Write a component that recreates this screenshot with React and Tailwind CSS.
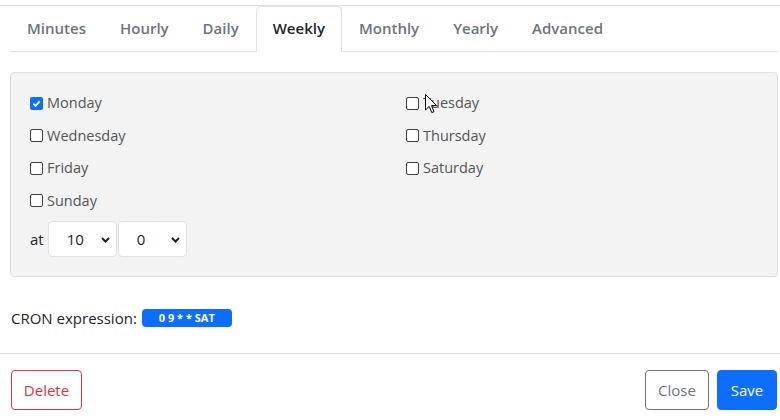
import React from "react";

const tabs = ["Minutes", "Hourly", "Daily", "Weekly", "Monthly", "Yearly", "Advanced"];

const days = [
  ["Monday", true],
  ["Tuesday", false],
  ["Wednesday", false],
  ["Thursday", false],
  ["Friday", false],
  ["Saturday", false],
  ["Sunday", false],
];

function Check({ checked }) {
  if (checked) {
    return (
      <span className="w-[13px] h-[13px] rounded-[2px] bg-[#0d6efd] flex items-center justify-center">
        <svg width="9" height="9" viewBox="0 0 10 10">
          <path d="M1.5 5.2 L4 7.6 L8.6 2.4" fill="none" stroke="white" strokeWidth="2" />
        </svg>
      </span>
    );
  }
  return <span className="w-[13px] h-[13px] rounded-[2px] border border-[#3f3f3f] bg-white" />;
}

function Select({ value }) {
  return (
    <div className="relative w-[69px] h-[36px] bg-white border border-[#dee2e6] rounded-[4px] flex items-center pl-[18px] text-[15px] text-[#212529]">
      {value}
      <svg className="absolute right-[6px] top-[15px]" width="9" height="6" viewBox="0 0 9 6">
        <path d="M1 1 L4.5 4.5 L8 1" fill="none" stroke="#222" strokeWidth="2" />
      </svg>
    </div>
  );
}

export default function App() {
  return (
    <div
      className="relative w-[780px] h-[420px] bg-white overflow-hidden text-[#212529]"
      style={{ fontFamily: '"Open Sans", "Noto Sans", sans-serif' }}
    >
      {/* header line */}
      <div className="h-[6px] border-b border-[#dee2e6]" />

      <div className="pl-[10px] pr-[2px]">
        {/* Tabs */}
        <div className="flex h-[46px] border-b border-[#dee2e6]">
          {tabs.map((t) => (
            <div
              key={t}
              className={
                t === "Weekly"
                  ? "h-[46px] px-[16px] pb-[2px] flex items-center border border-[#dee2e6] border-b-white rounded-t-[5px] bg-white text-[15px] font-semibold text-[#212529]"
                  : "h-[46px] px-[16px] pb-[2px] flex items-center border border-transparent text-[15px] font-semibold text-[#6c757d]"
              }
            >
              {t}
            </div>
          ))}
        </div>

        {/* Weekly panel */}
        <div className="mt-[20px] bg-[#f3f3f3] border border-[#dfdfdf] rounded-[4px] pt-[14px] pb-[19px] pl-[19px]">
          <div className="grid grid-cols-[376px_1fr]">
            {days.map(([d, c]) => (
              <div key={d} className="h-[32.5px] flex items-center gap-[4px] text-[14.5px] text-[#555]">
                <Check checked={c} />
                <span>{d}</span>
              </div>
            ))}
          </div>
          <div className="mt-[4px] flex items-center gap-[1px]">
            <span className="text-[15px] text-[#212529] mr-[3px]">at</span>
            <Select value="10" />
            <Select value="0" />
          </div>
        </div>

        {/* Cron */}
        <div className="mt-[32px] h-[18px] flex items-center pl-[1px] gap-[5px] text-[15px] text-[#212529]">
          <span>CRON expression:</span>
          <span className="w-[90px] h-[18px] rounded-[4px] bg-[#0d6efd] text-white text-[11px] font-bold flex items-center justify-center">
            0 9 * * SAT
          </span>
        </div>
      </div>

      {/* Footer */}
      <div className="mt-[26px] border-t border-[#dee2e6] pt-[16px] pl-[11px] pr-[3px] flex items-center">
        <button className="h-[40px] w-[71px] border border-[#dc3545] text-[#dc3545] rounded-[4px] text-[15px] bg-white">
          Delete
        </button>
        <div className="ml-auto flex gap-[8px]">
          <button className="h-[40px] w-[64px] border border-[#6c757d] text-[#6c757d] rounded-[4px] text-[15px] bg-white">
            Close
          </button>
          <button className="h-[40px] w-[60px] border border-[#0d6efd] bg-[#0d6efd] text-white rounded-[4px] text-[15px]">
            Save
          </button>
        </div>
      </div>

      {/* mouse cursor */}
      <svg className="absolute left-[425px] top-[94px]" width="13" height="20" viewBox="0 0 13 20">
        <path
          d="M0.5 0.5 L0.5 16 L4.2 12.4 L6.8 18.6 L9 17.6 L6.5 11.6 L11.5 11.6 Z"
          fill="white"
          stroke="black"
          strokeWidth="1"
          strokeLinejoin="miter"
        />
      </svg>
    </div>
  );
}
